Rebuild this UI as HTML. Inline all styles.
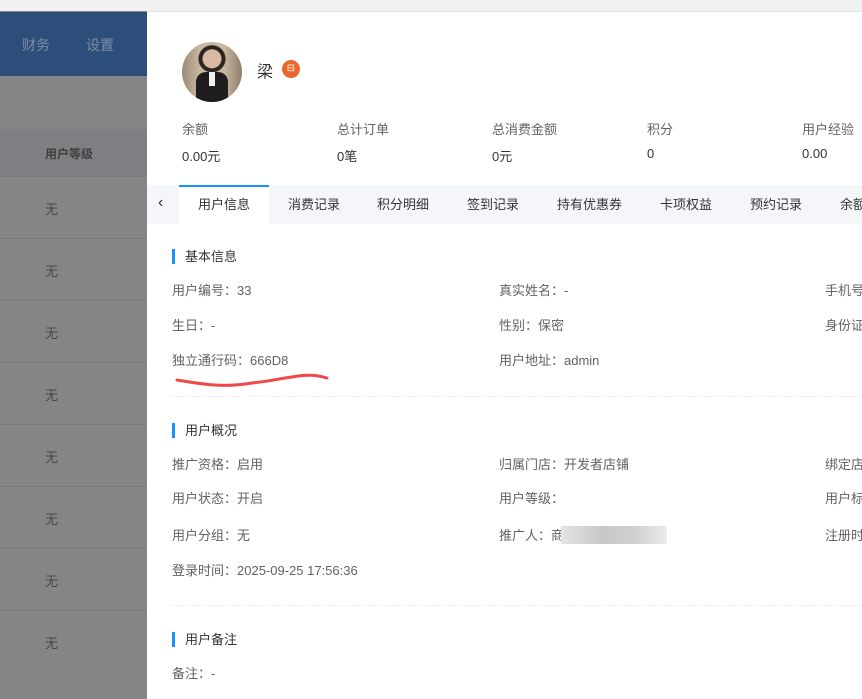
<!DOCTYPE html>
<html><head><meta charset="utf-8"><style>
*{margin:0;padding:0;box-sizing:border-box}
body{width:862px;height:699px;overflow:hidden;position:relative;background:#858585;font-family:"Liberation Sans","Noto Sans CJK SC",sans-serif;font-size:13px;color:#606266}
.abs{position:absolute;white-space:nowrap}
#top{left:0;top:0;width:862px;height:11px;background:#f0f1f3}
#hdr{left:0;top:12px;width:147px;height:64px;background:#2d4e7a}
#hdr span{position:absolute;top:23px;color:#7b8ca6;font-size:14px}
#th{left:0;top:129px;width:147px;height:47px;background:#7e7f82}
.row{left:0;width:147px;height:62px;border-top:1px solid #7a7a7a}
.row span{position:absolute;left:45px;top:22px;color:#474747;font-size:13px}
#drawer{left:147px;top:11px;width:715px;height:688px;background:#fff;border-top:1px solid #e0e0e0}
.blk{position:absolute;width:3px;height:15px;background:#1890ff}
</style></head><body>
<div class="abs" id="top"></div>
<div class="abs" id="hdr"><span style="left:22px">财务</span><span style="left:86px">设置</span></div>
<div class="abs" id="th"><span style="position:absolute;left:45px;top:16px;color:#3e3e3e;font-weight:bold;font-size:12px">用户等级</span></div>
<div class="abs row" style="top:176px"><span>无</span></div>
<div class="abs row" style="top:238px"><span>无</span></div>
<div class="abs row" style="top:300px"><span>无</span></div>
<div class="abs row" style="top:362px"><span>无</span></div>
<div class="abs row" style="top:424px"><span>无</span></div>
<div class="abs row" style="top:486px"><span>无</span></div>
<div class="abs row" style="top:548px"><span>无</span></div>
<div class="abs row" style="top:610px"><span>无</span></div>
<div class="abs" id="drawer">
 <div class="abs" style="left:35px;top:30px;width:60px;height:60px;border-radius:50%;background:radial-gradient(circle at 50% 28%,#d9b9a0 0 9px,#2a2220 10px 13px,transparent 14px),linear-gradient(90deg,#9b8b78,#c9b8a0 30%,#c9b8a0 70%,#8d7d6c);overflow:hidden"><div style="position:absolute;left:14px;top:30px;width:32px;height:34px;background:#1e1c1e;border-radius:10px 10px 0 0"></div><div style="position:absolute;left:27px;top:30px;width:6px;height:14px;background:#eee"></div></div>
 <div class="abs" style="left:110px;top:46px;font-size:16px;color:#333">梁</div>
 <div class="abs" style="left:135px;top:48px;width:18px;height:18px;border-radius:50%;background:#e8672e;color:#fff;font-size:10px;text-align:center;line-height:18px">⊟</div>
 <div class="abs" style="left:35px;top:107px">余额</div><div class="abs" style="left:35px;top:134px;color:#333">0.00元</div>
 <div class="abs" style="left:190px;top:107px">总计订单</div><div class="abs" style="left:190px;top:134px;color:#333">0笔</div>
 <div class="abs" style="left:345px;top:107px">总消费金额</div><div class="abs" style="left:345px;top:134px;color:#333">0元</div>
 <div class="abs" style="left:500px;top:107px">积分</div><div class="abs" style="left:500px;top:134px;color:#333">0</div>
 <div class="abs" style="left:655px;top:107px">用户经验</div><div class="abs" style="left:655px;top:134px;color:#333">0.00</div>
 <div class="abs" style="left:0;top:173px;width:715px;height:39px;background:#f5f6fa"></div>
 <div class="abs" style="left:32px;top:173px;width:90px;height:39px;background:#fff;border-top:2px solid #1890ff"></div>
 <div class="abs" style="left:11px;top:182px;color:#333;font-size:16px">‹</div>
 <div class="abs" style="left:51px;top:182px;color:#333">用户信息</div>
 <div class="abs" style="left:141px;top:182px;color:#333">消费记录</div>
 <div class="abs" style="left:230px;top:182px;color:#333">积分明细</div>
 <div class="abs" style="left:320px;top:182px;color:#333">签到记录</div>
 <div class="abs" style="left:410px;top:182px;color:#333">持有优惠券</div>
 <div class="abs" style="left:513px;top:182px;color:#333">卡项权益</div>
 <div class="abs" style="left:603px;top:182px;color:#333">预约记录</div>
 <div class="abs" style="left:693px;top:182px;color:#333">余额</div>
 <div class="blk" style="left:25px;top:237px"></div><div class="abs" style="left:38px;top:234px;color:#333">基本信息</div>
 <div class="abs" style="left:25px;top:268px">用户编号：33</div>
 <div class="abs" style="left:352px;top:268px">真实姓名：-</div>
 <div class="abs" style="left:678px;top:268px">手机号</div>
 <div class="abs" style="left:25px;top:303px">生日：-</div>
 <div class="abs" style="left:352px;top:303px">性别：保密</div>
 <div class="abs" style="left:678px;top:303px">身份证</div>
 <div class="abs" style="left:25px;top:338px">独立通行码：666D8</div>
 <div class="abs" style="left:352px;top:338px">用户地址：admin</div>
 <svg class="abs" style="left:25px;top:360px" width="160" height="20"><path d="M5 8 C30 12,50 16,80 11 C100 9,110 6,120 5 C135 2,145 3,155 6" stroke="#f04848" stroke-width="3" fill="none" stroke-linecap="round"/></svg>
 <div class="abs" style="left:25px;top:384px;width:690px;border-top:1px dashed #ececec"></div>
 <div class="blk" style="left:25px;top:411px"></div><div class="abs" style="left:38px;top:408px;color:#333">用户概况</div>
 <div class="abs" style="left:25px;top:442px">推广资格：启用</div>
 <div class="abs" style="left:352px;top:442px">归属门店：开发者店铺</div>
 <div class="abs" style="left:678px;top:442px">绑定店</div>
 <div class="abs" style="left:25px;top:476px">用户状态：开启</div>
 <div class="abs" style="left:352px;top:476px">用户等级：</div>
 <div class="abs" style="left:678px;top:476px">用户标</div>
 <div class="abs" style="left:25px;top:513px">用户分组：无</div>
 <div class="abs" style="left:352px;top:513px">推广人：商</div>
 <div class="abs" style="left:414px;top:514px;width:106px;height:18px;background:linear-gradient(90deg,#e4e4e4,#c8c8c8 40%,#d0d0d0 70%,#ececec)"></div>
 <div class="abs" style="left:678px;top:513px">注册时</div>
 <div class="abs" style="left:25px;top:548px">登录时间：2025-09-25 17:56:36</div>
 <div class="abs" style="left:25px;top:593px;width:690px;border-top:1px dashed #ececec"></div>
 <div class="blk" style="left:25px;top:620px"></div><div class="abs" style="left:38px;top:617px;color:#333">用户备注</div>
 <div class="abs" style="left:25px;top:651px">备注：-</div>
</div>
</body></html>
